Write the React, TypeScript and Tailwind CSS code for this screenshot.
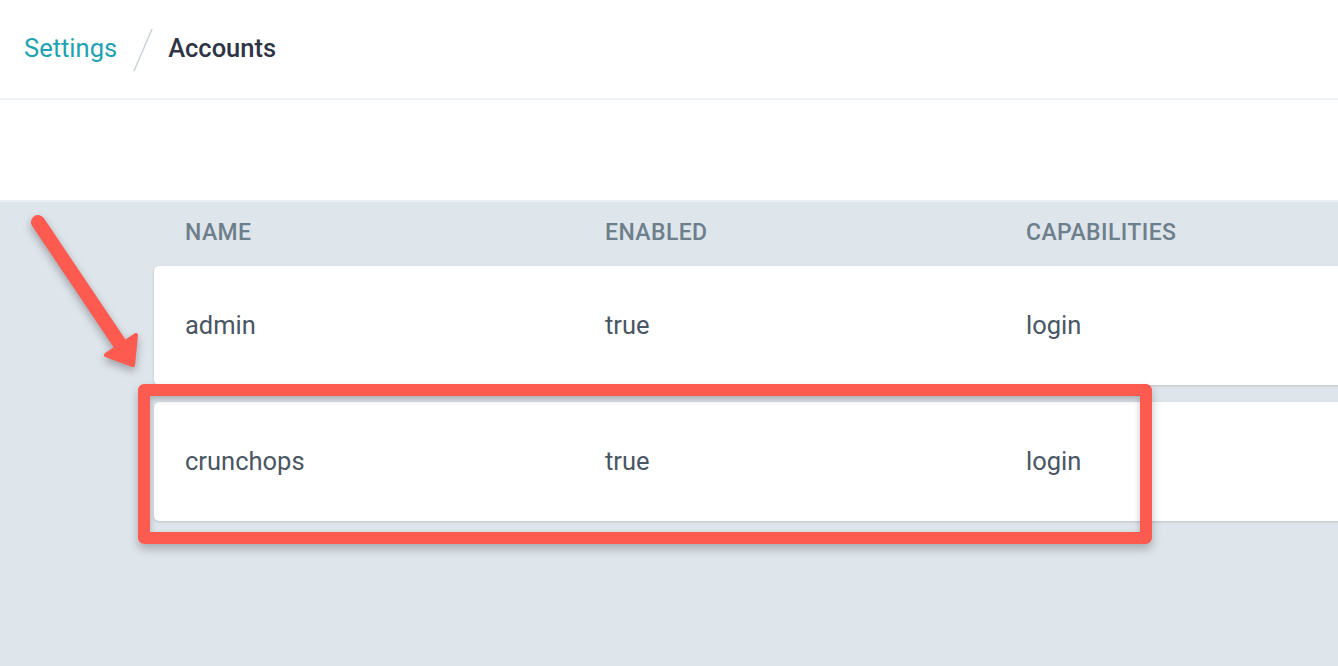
import React from "react";

const rows = [
  { name: "admin", enabled: "true", caps: "login" },
  { name: "crunchops", enabled: "true", caps: "login" },
];

export default function App() {
  return (
    <div
      className="relative w-[1338px] h-[666px] overflow-hidden bg-white flex flex-col"
      style={{ fontFamily: "Roboto, 'Liberation Sans', sans-serif" }}
    >
      <div className="h-[100px] shrink-0 flex items-center pl-[24px] border-b-2 border-[#eef1f5]">
        <span className="text-[25.5px] text-[#1ea2b1] leading-none">Settings</span>
        <svg width="20" height="44" viewBox="0 0 20 44" className="ml-[16px] mr-[15px] mt-[2px]">
          <line x1="1" y1="43" x2="19" y2="1" stroke="#c9d2db" strokeWidth="1.5" />
        </svg>
        <span className="text-[25.5px] font-medium text-[#2e3445] leading-none">Accounts</span>
      </div>
      <div className="h-[100px] shrink-0" />
      <div className="flex-1 bg-[#dee5eb] border-t-2 border-[#ebeff3] flex flex-col">
        <div className="h-[64px] flex items-center pb-[2px] pl-[185px] text-[23px] font-medium tracking-[0.4px] text-[#6e7f8c]">
          <div className="w-[420px] shrink-0">NAME</div>
          <div className="w-[421px] shrink-0">ENABLED</div>
          <div className="shrink-0">CAPABILITIES</div>
        </div>
        <div className="flex flex-col gap-[17px] ml-[154px] w-[1300px]">
          {rows.map((r) => (
            <div
              key={r.name}
              className="h-[119px] bg-white rounded-[5px] flex items-center pl-[31px] text-[25.5px] text-[#4a5663] shadow-[0_1px_3px_rgba(0,0,0,0.15)]"
            >
              <div className="w-[420px] shrink-0">{r.name}</div>
              <div className="w-[421px] shrink-0">{r.enabled}</div>
              <div className="shrink-0">{r.caps}</div>
            </div>
          ))}
        </div>
      </div>

      {/* annotation: highlight box */}
      <div className="absolute left-[138px] top-[384px] w-[1014px] h-[160px] border-[12px] border-[#fd5a50] rounded-[6px] shadow-[0_5px_10px_rgba(0,0,0,0.25),inset_0_3px_6px_rgba(0,0,0,0.25)]" />

      {/* annotation: arrow */}
      <svg
        className="absolute left-0 top-0"
        width="200"
        height="400"
        viewBox="0 0 200 400"
        style={{ filter: "drop-shadow(0px 4px 4px rgba(0,0,0,0.3))" }}
      >
        <line x1="38" y1="222" x2="122" y2="347" stroke="#fd5a50" strokeWidth="14" strokeLinecap="round" />
        <polygon
          points="106,355 136,335 133,365"
          fill="#fd5a50"
          stroke="#fd5a50"
          strokeWidth="4"
          strokeLinejoin="round"
        />
      </svg>
    </div>
  );
}
